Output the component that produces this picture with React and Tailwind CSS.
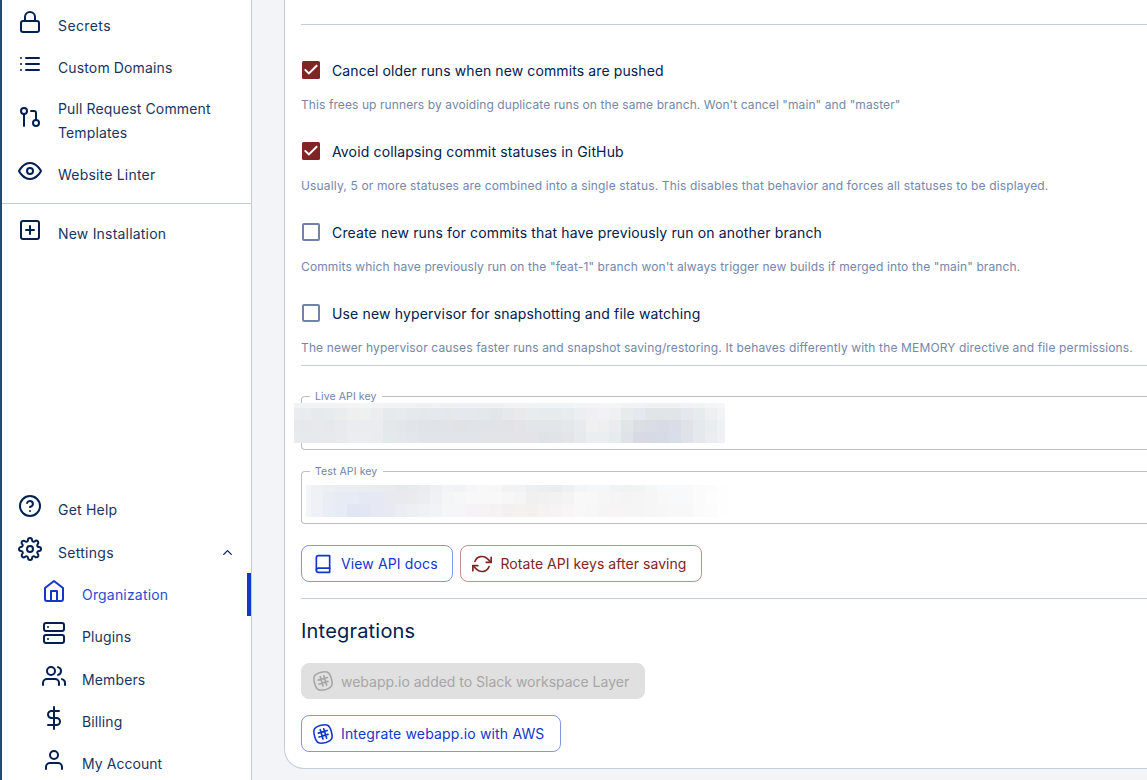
import React from "react";
import { FiLock, FiList, FiGitPullRequest, FiEye, FiPlusSquare, FiHelpCircle, FiSettings, FiHome, FiServer, FiUsers, FiDollarSign, FiUser, FiBook, FiRefreshCw, FiChevronUp } from "react-icons/fi";

const liveMask = {
  x0: 0,
  first: 5,
  step: 11.94,
  width: 431,
  rows: [5, 12, 12, 11],
  colors: [
    "f2f2f4 f1f2f4 f0f2f4 f0f2f4 f2f3f5 f4f4f5 f4f5f5 f3f3f5 f0f2f4 f0f2f4 f0f2f4 f0f1f3 f0f2f4 f0f1f3 eff1f4 eff1f4 eff1f3 f0f1f3 f1f2f4 f2f2f4 f1f3f4 f0f3f5 f0f3f5 f0f3f5 f3f4f6 f4f4f7 f5f5f7 f4f5f5 f2f3f4 f0f2f6 eff1f2 eff1f2 eff1f2 f0f2f5 f1f4f5 f4f5f6 f6f6f8",
    "ebecee e9ebee e6eaed e6ebee ebecee efeff0 eff0f1 ededf0 e6eaed e7eaee e5e9ec e4e8eb e5e9ed e4e8eb e5e8ee e5e9ed e3e8eb e2e6ea e6e8ec e9e9ec e7ecef e6ebee e6ebee e7ecee eceef1 f0f0f4 f1f2f4 eff0f1 e8ebec e5e8ef e1e5e8 e1e5e8 e1e5e8 e4e8ee e6ebed eeeff1 f2f3f5",
    "e8e9ec e7e8ec e7e9ec e7e8ec e9eaed ebecef ebecef ebecef e5e8ea e3e6ea e1e4e8 e0e3e7 e0e3e7 e0e3e7 e0e2e6 e0e3e7 e0e3e7 e1e3e7 e2e3e7 e3e3e8 e2e6ea e2e6e9 e2e6ea e4e8eb e9eaed f0f0f1 efeff0 ebecef e1e5e8 dbdee3 d9dee6 d7dbe6 dadce7 dfe2e6 e4e9ed e7edf0 eff1f2",
    "e7ebed e7eaed e6e9ed e8e9ec e9eaed ecedef ecedf0 ebecef e4e9ec e4e7eb e3e6ea e1e4e8 e1e4e9 e1e4e8 e2e4e9 e1e4e8 e2e4e8 e3e4e8 e2e4e8 e4e4e8 e4e4e8 dfe3e7 e0e4e7 e3e5e9 e8e9ed ebeeef eaeef0 e6ebee dfe2e6 d7dae3 d5dae4 d6dbe5 daddea dfe2e9 e5e9ed ecedf3 f0f1f4",
  ],
};

const testMask = {
  x0: 0,
  first: 5,
  step: 11.94,
  width: 429,
  rows: [7, 12, 13],
  colors: [
    "f4f5f8 eff1f5 eeeff3 ebedf2 ebedf2 ebecf1 eaebf0 e9ebf0 e7e9ed e8ebee ebecf0 eef0f4 f3f4f6 f2f3f6 f6f6f8 f8f8f9 f7f7f8 f3f3f4 f2f3f4 eeeff0 edeef0 ecedef eef0f2 f2f4f6 f4f6f8 f4f6f8 f2f3f4 f1f2f2 f2f3f3 f5f6f6 f7f9fb f8f9fa f8f9fa fbfbfb fcfcfc fefefe",
    "f4f5f9 eff1f6 ebedf4 e7ebf3 e7ebf5 e6e9f4 e6e9f3 e8eaf0 e8eaee e9ebef ebedf1 eff1f4 f3f5f7 f6f7f9 f8f8f9 f8f8f9 f8f8f9 f7f7f8 f5f5f6 f1f0f1 f1f1f2 f2f2f3 f5f4f5 f8f8f9 f8f8f9 f7f6f7 f5f5f5 f4f4f4 f5f5f5 f6f6f6 f8f8f8 f8f9fa f8f9fa fbfbfb fdfdfd fefefe",
    "f4f5fa eff1f7 e9edf5 e6ebf5 e2e6f3 e3e7f5 e6e9f4 e7eaf3 ebecf4 edeff3 eff1f5 f1f3f6 f5f6f8 f6f5f7 f5f3f5 f5f3f4 f5f2f3 f5f0f0 f5f1f1 f5f0f0 f6f2f2 f5f3f3 f7f5f6 f9f7f8 f8f7f7 f6f5f5 f6f4f4 f6f5f5 f5f5f5 f6f6f6 f7f7f7 f8f8f8 f8f8f8 fbfbfb fcfcfc fefefe",
  ],
};

// Pixelated cover drawn over a secret value.
function Mosaic({ mask, className }) {
  const height = mask.rows.reduce((a, b) => a + b, 0);
  const edge = (c) => (c === 0 ? 0 : Math.round(mask.first + (c - 1) * mask.step));
  let y = 0;
  return (
    <svg width={mask.width} height={height} shapeRendering="crispEdges" className={"absolute " + className}>
      {mask.rows.map((h, r) => {
        const top = y;
        y += h;
        return mask.colors[r].split(" ").map((color, c) => (
          <rect key={r + "-" + c} x={edge(c)} y={top} width={edge(c + 1) - edge(c)} height={h} fill={"#" + color} />
        ));
      })}
    </svg>
  );
}

function NavItem({ icon: Icon, label, className, iconClass = "", labelClass = "mt-1", tracking = "tracking-[0.13px]", children }) {
  return (
    <div className={"flex shrink-0 items-start " + className}>
      <Icon size={24} className={"shrink-0 " + iconClass} />
      <span className={"ml-4 text-[14px] leading-6 opacity-90 " + tracking + " " + labelClass}>{label}</span>
      {children}
    </div>
  );
}

function Option({ checked, title, note, titleTracking = "tracking-[0.15px]", noteTracking }) {
  return (
    <div className="h-[81px] shrink-0">
      <div className="flex h-6 items-start">
        <svg width="20" height="20" viewBox="0 0 20 20" className="mt-px shrink-0">
          {checked ? (
            <>
              <rect x="1" y="1" width="18" height="18" rx="1.5" fill="#812424" />
              <path d="M3.7 9.4L7.9 13.4L16.2 5.2" fill="none" stroke="#fff" strokeWidth="2" />
            </>
          ) : (
            <rect x="2" y="2" width="16" height="16" rx="1" fill="none" stroke="#7083a8" strokeWidth="2" />
          )}
        </svg>
        <span className={"ml-[11px] whitespace-nowrap text-[14px] leading-6 " + titleTracking}>{title}</span>
      </div>
      <p className={"mt-3 whitespace-nowrap text-[12px] leading-5 text-[#7487ab] " + noteTracking}>{note}</p>
    </div>
  );
}

function KeyField({ label, className, legendClass, children }) {
  return (
    <div className={"relative shrink-0 rounded-l-[4px] border border-r-0 border-[#bfbfbf] " + className}>
      <span className={"absolute -top-[7px] left-2 bg-white pl-[5px] text-[10.5px] leading-[14px] tracking-[0.1px] whitespace-nowrap text-[#7083a8] " + legendClass}>{label}</span>
      {children}
    </div>
  );
}

function HashIcon() {
  return (
    <svg width="20" height="20" viewBox="0 0 20 20" fill="none" stroke="currentColor" strokeLinecap="round" className="shrink-0">
      <path strokeWidth="1.6" d="M7 1.6C13.9-.2 16.3.6 18.2 7C20.2 13.9 19.4 16.3 13 18.4C6.1 20.2 3.7 19.4 1.8 13C-.2 6.1.6 3.7 7 1.6Z" />
      <path strokeWidth="1.7" d="M7.2 5.7l2.8 9.2M10.8 4.9l2.8 9.2M5.3 9.1l9-2.6M6 13l9-2.6" />
    </svg>
  );
}

function Button({ icon, label, className, labelClass = "tracking-[0.13px]" }) {
  return (
    <div className={"flex shrink-0 items-center rounded-lg pl-[11px] " + className}>
      {icon}
      <span className={"ml-2 whitespace-nowrap text-[14px] leading-6 " + labelClass}>{label}</span>
    </div>
  );
}

export default function App() {
  return (
    <div className="flex h-[780px] w-[1147px] overflow-hidden bg-[#f3f4f7] font-[Inter,sans-serif] text-[#00204f]">
      <div className="w-[2px] shrink-0 bg-[#1f4b78]" />
      <nav className="flex w-[250px] shrink-0 flex-col border-r border-[#c7cbd6] bg-white">
        <NavItem icon={FiLock} label="Secrets" className="h-[42px] pt-[10px] pl-4" tracking="tracking-[0.4px]" />
        <NavItem icon={FiList} label="Custom Domains" className="h-[42px] pt-[10px] pl-4" />
        <NavItem icon={FiGitPullRequest} label="Pull Request Comment Templates" className="h-[65px] pt-[13px] pl-4" iconClass="mt-2" labelClass="w-[170px]" />
        <NavItem icon={FiEye} label="Website Linter" className="h-[55px] border-b border-[#c7cbd6] pt-[10px] pl-4" tracking="tracking-[0.2px]" />
        <NavItem icon={FiPlusSquare} label="New Installation" className="pt-[14px] pl-4" tracking="tracking-[0.2px]" />
        <div className="mt-auto flex h-[292px] shrink-0 flex-col overflow-hidden">
          <NavItem icon={FiHelpCircle} label="Get Help" className="h-[43px] pt-[6px] pl-4" tracking="tracking-[0.2px]" />
          <NavItem icon={FiSettings} label="Settings" className="h-[42px] pt-[6px] pl-4" tracking="tracking-[0.28px]">
            <FiChevronUp size={15} className="mt-2 mr-4 ml-auto" />
          </NavItem>
          <div className="flex h-[42px] shrink-0 justify-between text-[#1237cb]">
            <NavItem icon={FiHome} label="Organization" className="pt-[6px] pl-10" tracking="tracking-[0.18px]" />
            <div className="h-[43px] w-1 bg-[#1237cb]" />
          </div>
          <NavItem icon={FiServer} label="Plugins" className="h-[43px] pt-[6px] pl-10" />
          <NavItem icon={FiUsers} label="Members" className="h-[42px] pt-[6px] pl-10" />
          <NavItem icon={FiDollarSign} label="Billing" className="h-[42px] pt-[6px] pl-10" />
          <NavItem icon={FiUser} label="My Account" className="h-[42px] pt-[6px] pl-10" tracking="tracking-[0.05px]" />
        </div>
      </nav>
      <main className="ml-8 flex h-[769px] flex-1 flex-col overflow-hidden rounded-bl-[20px] border-b border-l border-[#c5cddb] bg-white pl-4">
        <div className="mb-[34px] h-[25px] shrink-0 border-b border-[#c5cddb]" />
        <Option checked title="Cancel older runs when new commits are pushed" titleTracking="tracking-[0.11px]" noteTracking="tracking-[0.09px]" note={'This frees up runners by avoiding duplicate runs on the same branch. Won\'t cancel "main" and "master"'} />
        <Option checked title="Avoid collapsing commit statuses in GitHub" noteTracking="tracking-[0.155px]" note="Usually, 5 or more statuses are combined into a single status. This disables that behavior and forces all statuses to be displayed." />
        <Option title="Create new runs for commits that have previously run on another branch" noteTracking="tracking-[0.12px]" note={'Commits which have previously run on the "feat-1" branch won\'t always trigger new builds if merged into the "main" branch.'} />
        <Option title="Use new hypervisor for snapshotting and file watching" noteTracking="tracking-[0.14px]" note="The newer hypervisor causes faster runs and snapshot saving/restoring. It behaves differently with the MEMORY directive and file permissions." />
        <div className="-mt-[18px] mb-[30px] h-px shrink-0 bg-[#c5cddb]" />
        <KeyField label="Live API key" className="h-[54px]" legendClass="w-[72px]">
          <Mosaic mask={liveMask} className="top-[6px] -left-2" />
        </KeyField>
        <KeyField label="Test API key" className="mt-[21px] h-[53px]" legendClass="w-[73px]">
          <Mosaic mask={testMask} className="top-[13px] left-1" />
        </KeyField>
        <div className="mt-[21px] flex shrink-0 gap-[7px]">
          <Button icon={<FiBook size={20} />} label="View API docs" className="h-[37px] w-[152px] border border-[#8497e3] text-[#1237cb]" />
          <Button icon={<FiRefreshCw size={20} />} label="Rotate API keys after saving" labelClass="ml-[8.5px] tracking-[0.05px]" className="h-[37px] w-[242px] border border-[#c08f8f] text-[#812424]" />
        </div>
        <div className="mt-4 h-px shrink-0 bg-[#c5cddb]" />
        <h2 className="mt-[17px] shrink-0 text-[20px] leading-[30px] tracking-[0.2px]">Integrations</h2>
        <Button icon={<HashIcon />} label="webapp.io added to Slack workspace Layer" labelClass="pt-px tracking-[-0.01px]" className="mt-[17px] h-9 w-[344px] border border-[#e0e0e0] bg-[#e0e0e0] text-[#a6a6a6]" />
        <Button icon={<HashIcon />} label="Integrate webapp.io with AWS" labelClass="tracking-[0.16px]" className="mt-4 h-[37px] w-[260px] border border-[#8497e3] text-[#1237cb]" />
      </main>
    </div>
  );
}
